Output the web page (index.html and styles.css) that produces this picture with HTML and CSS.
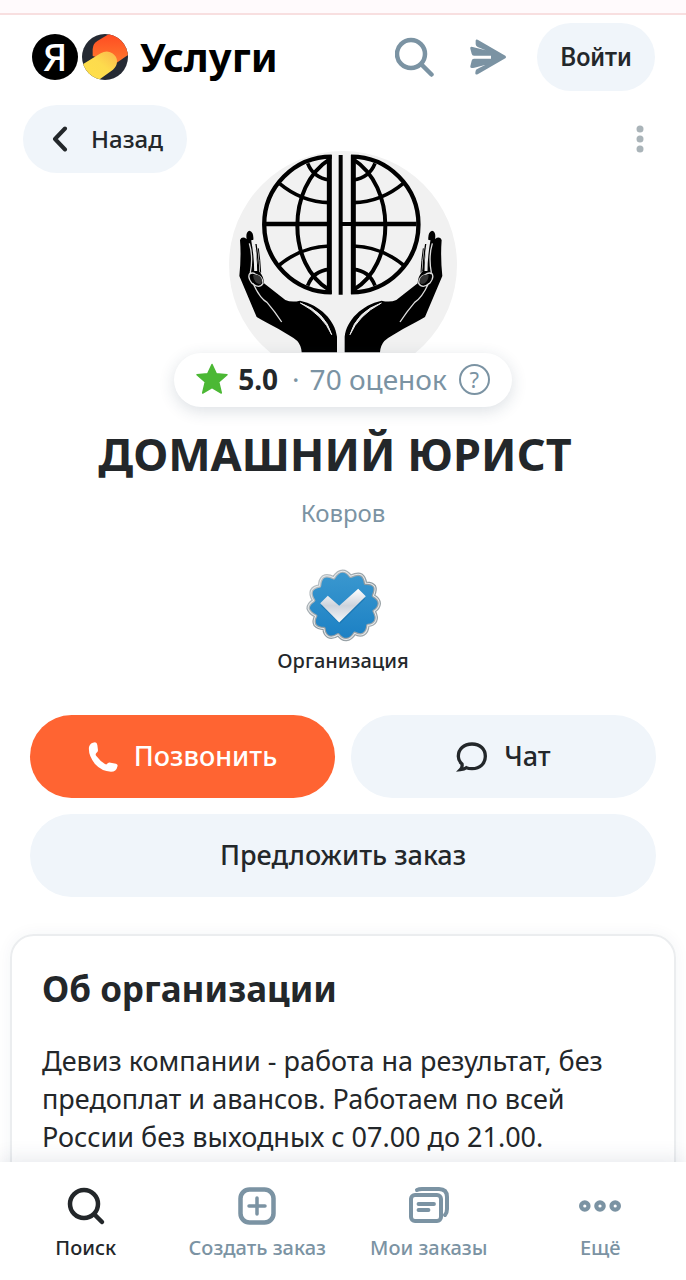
FILE: index.html
```html
<!DOCTYPE html>
<html lang="ru">
<head>
<meta charset="utf-8">
<meta name="viewport" content="width=device-width, initial-scale=1">
<title>ДОМАШНИЙ ЮРИСТ</title>
<link rel="stylesheet" href="styles.css">
</head>
<body>
<div class="app">
  <div class="strip"></div>
  <main class="page">
    <header class="header">
      <a class="logo" href="#" aria-label="Яндекс Услуги">
        <span class="logo-ya">Я</span>
        <svg class="logo-mark" viewBox="0 0 138 138" aria-hidden="true">
          <defs>
            <clipPath id="mark"><circle cx="69" cy="69" r="69"/></clipPath>
            <linearGradient id="yellow" x1="1" y1="0" x2="0" y2="1"><stop offset="0" stop-color="#fbb64c"/><stop offset=".45" stop-color="#fddb4d"/><stop offset="1" stop-color="#ffe04a"/></linearGradient>
            <linearGradient id="orange" x1="0" y1="0" x2="0" y2="1"><stop offset="0" stop-color="#ff4b22"/><stop offset="1" stop-color="#ff7a2e"/></linearGradient>
          </defs>
          <g clip-path="url(#mark)">
            <rect width="138" height="138" fill="#252a33"/>
            <path d="M81 0 46 21Q33 29 32 45V66L102 88 138 63V0Z" fill="url(#orange)"/>
            <path d="M0 92 56 58Q75 47 91 58 105 67 105 82 105 97 93 107L50 138H0Z" fill="url(#yellow)"/>
          </g>
        </svg>
        <span class="logo-text">Услуги</span>
      </a>
      <nav class="header-actions">
        <button class="icon-btn" aria-label="Поиск">
          <svg width="40" height="40" viewBox="0 0 40 40" fill="none" stroke="#7b93a3" stroke-width="4.5" stroke-linecap="round"><circle cx="16" cy="17" r="14"/><path d="m26.500 27.500 10 10"/></svg>
        </button>
        <button class="icon-btn" aria-label="Избранное">
          <svg width="38" height="36" viewBox="0 0 114 108" fill="#7b93a3"><path d="M20 5Q20 0 26 2L109 50Q113 54 109 58L26 106Q18 109 19 101L20 95Q21 91 26 89L48 78 16 86Q3 90 4 82L8 65Q9 59 15 59H66V50H15Q9 50 8 44L4 29Q3 21 11 24L50 34 26 24Q20 21 20 16Z"/></svg>
        </button>
        <button class="pill login">Войти</button>
      </nav>
    </header>

    <div class="toolbar">
      <button class="pill back">
        <svg width="16" height="26" viewBox="0 0 16 26" fill="none" stroke="#23272a" stroke-width="4" stroke-linecap="round" stroke-linejoin="round"><path d="M13 2.500 3 13l10 10.500"/></svg>
        <span>Назад</span>
      </button>
      <button class="more" aria-label="Меню">
        <svg width="8" height="28" viewBox="0 0 8 28" fill="#aab4b9"><circle cx="4" cy="4" r="3.500"/><circle cx="4" cy="14" r="3.500"/><circle cx="4" cy="24" r="3.500"/></svg>
      </button>
    </div>

    <section class="profile">
      <svg class="avatar" viewBox="27 33 684 684" role="img" aria-label="Фото организации">
        <defs>
          <clipPath id="round"><circle cx="369" cy="375" r="342"/></clipPath>
          <g id="half" fill="none" stroke="#000">
            <path d="M328 45V462" stroke-width="15"/>
            <path d="M335 50A202 203 0 0 0 335 457" stroke-width="13"/>
            <path d="M138 252H328" stroke-width="13"/>
            <path d="M328 58C200 140 200 375 328 450" stroke-width="12"/>
            <path d="M178 130Q245 186 328 188M178 375Q245 320 328 318" stroke-width="11"/>
            <path d="M263 70Q280 113 328 120M263 437Q280 392 328 388" stroke-width="11"/>
          </g>
          <g id="hand">
            <path d="M60 300Q66 287 80 297 76 275 89 272 102 277 100 300L118 395Q131 408 132 430L196 480Q215 488 240 482C300 495 345 540 351 590V637H245Q244 617 232 603C205 580 150 555 110 531L58 408Q64 350 60 300Z" fill="#000"/>
            <path d="M98 300Q107 350 107 393" fill="none" stroke="#efefef" stroke-width="9"/>
            <path d="M108 312Q114 350 116 393" fill="none" stroke="#000" stroke-width="4"/>
            <path d="M115 325Q120 360 122 398" fill="none" stroke="#000" stroke-width="3"/>
            <path d="M88 310Q100 350 91 398 80 410 96 430 118 448 129 430 128 410 111 405 97 395 90 402M99 430Q120 475 141 487 165 515 185 546" fill="none" stroke="#ddd" stroke-width="4"/>
            <path d="M241 489Q315 515 335 584 310 526 241 489Z" fill="#eee" stroke="#eee" stroke-width="3"/>
            <path d="M99 405Q120 400 126 419 126 438 111 430 100 422 99 405Z" fill="#333"/>
          </g>
        </defs>
        <g clip-path="url(#round)">
          <rect x="27" y="33" width="684" height="684" fill="#f1f1f1"/>
          <use href="#half"/>
          <use href="#half" transform="matrix(-1 0 0 1 728 0)"/>
          <path d="M362 45V464" stroke="#000" stroke-width="12"/>
          <path d="M362 252H400" stroke="#000" stroke-width="12"/>
          <use href="#hand"/>
          <use href="#hand" transform="matrix(-1 0 0 1 725 0)"/>
        </g>
      </svg>
      <button class="rating">
        <svg width="34" height="32" viewBox="0 0 34 32" fill="#4bb834" stroke="#4bb834" stroke-width="1.500" stroke-linejoin="round"><path d="m17 1.500 4.300 9.300L32 11.700l-8.300 7.200 2.600 11.100L17 24.500l-9.300 5.500 2.600-11.100L2 11.700l10.700-.9Z"/></svg>
        <strong>5.0</strong>
        <span class="dot">·</span>
        <span class="count">70 оценок</span>
        <span class="help">?</span>
      </button>
      <h1>ДОМАШНИЙ ЮРИСТ</h1>
      <p class="city">Ковров</p>
      <div class="badge">
        <svg width="76" height="76" viewBox="5 -3 220 220" aria-hidden="true">
          <defs>
            <linearGradient id="rim" x1="0" y1="0" x2="1" y2="1"><stop offset="0" stop-color="#c9cdd0"/><stop offset=".5" stop-color="#8d999f"/><stop offset="1" stop-color="#a4abaf"/></linearGradient>
            <linearGradient id="blue" x1="0" y1="0" x2="0" y2="1"><stop offset="0" stop-color="#3b98cf"/><stop offset="1" stop-color="#1b80c4"/></linearGradient>
            <linearGradient id="tick" x1="0" y1="0" x2="0" y2="1"><stop offset="0" stop-color="#fff"/><stop offset=".5" stop-color="#cdd3dc"/><stop offset="1" stop-color="#f5f7f9"/></linearGradient>
            <path id="seal" d="M114 9Q126 9 137 24 158 14 168 20 178 27 180 44 199 43 206 53 211 63 203 80 220 89 220 103 219 116 205 125 215 142 209 154 203 165 187 166 186 184 175 191 164 198 149 189 138 206 125 207 112 208 101 193 84 204 72 198 61 192 60 175 42 175 34 165 28 154 36 139 18 130 14 117 14 104 30 94 19 77 24 65 30 54 47 52 48 33 58 25 70 19 88 28 100 9 114 9Z"/>
          </defs>
          <use href="#seal" fill="url(#blue)" stroke="url(#rim)" stroke-width="10" stroke-linejoin="round"/>
          <use href="#seal" fill="none" stroke="#e6eaec" stroke-width="3" stroke-linejoin="round"/>
          <path d="m51 109 22-22 31 28 53-49 22 23-73 72Z" fill="#126da9" opacity=".6"/>
          <path d="m49 102 22-22 33 29 55-49 22 22-77 76Z" fill="url(#tick)"/>
        </svg>
        <span>Организация</span>
      </div>
      <div class="actions">
        <button class="action call">
          <svg width="30" height="30" viewBox="0 0 90 90" fill="#fff"><path d="M3 15Q7 2 21 1 27 1 28 9L30 25Q30 30 25 33 21 37 25 42 37 58 51 66 56 69 59 64 63 60 68 62L84 65Q91 67 88 74 85 89 69 89 41 88 21 66 0 40 3 15Z"/></svg>
          <span>Позвонить</span>
        </button>
        <button class="action">
          <svg width="32" height="30" viewBox="0 0 96 90" fill="none" stroke="#23272a" stroke-width="10"><path d="M48 6C73 6 88 22 88 43S73 80 48 80Q38 80 31 77 25 82 13 83 20 76 18 66 7 57 7 43C7 22 23 6 48 6Z"/></svg>
          <span>Чат</span>
        </button>
        <button class="action wide"><span>Предложить заказ</span></button>
      </div>
    </section>

    <section class="card">
      <h2>Об организации</h2>
      <p>Девиз компании - работа на результат, без предоплат и авансов. Работаем по всей России без выходных с 07.00 до 21.00.</p>
    </section>
  </main>

  <nav class="tabs">
    <a class="tab active" href="#">
      <svg width="40" height="40" viewBox="0 0 40 40" fill="none" stroke="currentColor" stroke-width="4.500" stroke-linecap="round"><circle cx="18" cy="18" r="14"/><path d="m29 29 7 7"/></svg>
      Поиск
    </a>
    <a class="tab" href="#">
      <svg width="40" height="40" viewBox="0 0 40 40" fill="none" stroke="currentColor" stroke-width="4.500" stroke-linecap="round"><rect x="3.500" y="3.500" width="33" height="33" rx="9"/><path d="M20 12v16M12 20h16" stroke-width="3.500"/></svg>
      Создать заказ
    </a>
    <a class="tab" href="#">
      <svg width="42" height="40" viewBox="0 0 42 40" fill="none" stroke="currentColor" stroke-linecap="round"><rect x="3" y="9" width="30" height="26" rx="4" stroke-width="4"/><path d="M9 4Q11 3 14 3H31q8 0 8 8v12q0 4-2 6" stroke-width="4"/><path d="M10.500 18h15.500M10.500 24h10" stroke-width="3.800"/></svg>
      Мои заказы
    </a>
    <a class="tab" href="#">
      <svg width="42" height="40" viewBox="0 0 42 40" fill="none" stroke="currentColor" stroke-width="4.200"><circle cx="5.800" cy="20" r="3.700"/><circle cx="21" cy="20" r="3.700"/><circle cx="36.200" cy="20" r="3.700"/></svg>
      Ещё
    </a>
  </nav>
</div>
</body>
</html>
```
FILE: styles.css
```css
* {
  box-sizing: border-box;
}

body {
  margin: 0;
  background: #fff;
  color: #23272a;
  font-family: "Noto Sans", "Open Sans", sans-serif;
}

button {
  border: 0;
  padding: 0;
  background: none;
  color: inherit;
  font: inherit;
}

a {
  color: inherit;
  text-decoration: none;
}

svg {
  display: block;
  flex: none;
}

h1, h2, p {
  margin: 0;
}

.app {
  display: flex;
  flex-direction: column;
  height: 100vh;
}

.strip {
  flex: none;
  height: 15px;
  background: #fffafc;
  border-bottom: 2px solid #f8dfe0;
}

.page {
  display: flex;
  flex-direction: column;
  flex: 1;
  min-height: 0;
  overflow-y: auto;
  scrollbar-width: none;
}

.header {
  display: flex;
  align-items: center;
  justify-content: space-between;
  padding: 8px 31px 0 32px;
}

.logo {
  display: flex;
  align-items: center;
  gap: 4px;
}

.logo-ya {
  display: flex;
  align-items: center;
  justify-content: center;
  width: 46px;
  height: 46px;
  padding-bottom: 3px;
  border-radius: 50%;
  background: #000;
  color: #fff;
  font-size: 38px;
  font-weight: 500;
  line-height: 42px;
}

.logo-mark {
  width: 46px;
  height: 46px;
}

.logo-text {
  padding-left: 8px;
  color: #000;
  font-size: 40px;
  font-weight: 700;
  line-height: 56px;
}

.header-actions {
  display: flex;
  align-items: center;
  gap: 34px;
}

.pill {
  height: 68px;
  border-radius: 34px;
  background: #f0f5fa;
  font-size: 24px;
  font-weight: 500;
}

.login {
  width: 118px;
  margin-left: -4px;
  font-family: Roboto, "Liberation Sans", sans-serif;
  font-size: 25px;
}

.toolbar {
  display: flex;
  align-items: center;
  justify-content: space-between;
  padding: 14px 42px 0 23px;
}

.back {
  display: flex;
  align-items: center;
  gap: 23px;
  padding: 0 24px 0 29px;
}

.back span,
.action span {
  padding-bottom: 2px;
}

.profile {
  display: flex;
  flex-direction: column;
  align-items: center;
  padding: 0 30px;
}

.avatar {
  width: 228px;
  height: 228px;
  margin-top: -22px;
}

.rating {
  position: relative;
  display: flex;
  align-items: center;
  height: 54px;
  margin-top: -26px;
  padding: 0 22px 2px 21px;
  border-radius: 27px;
  background: #fff;
  box-shadow: 0 4px 16px rgba(40, 60, 90, 0.16);
  font-size: 28px;
}

.rating strong {
  margin-left: 9px;
}

.dot {
  margin: 0 10px 0 14px;
  color: #7b93a3;
}

.count {
  color: #7b93a3;
}

.help {
  width: 31px;
  height: 31px;
  margin-left: 12px;
  border: 2px solid #7b93a3;
  border-radius: 50%;
  color: #7b93a3;
  font-size: 22px;
  line-height: 27px;
  text-align: center;
}

h1 {
  margin-top: 15px;
  padding-right: 16px;
  font-size: 45px;
  font-weight: 700;
  line-height: 64px;
}

.city {
  margin-top: 9px;
  color: #7b93a3;
  font-size: 24px;
  line-height: 36px;
}

.badge {
  display: flex;
  flex-direction: column;
  align-items: center;
  gap: 2px;
  margin-top: 36px;
  font-size: 20px;
  font-weight: 500;
  line-height: 32px;
}

.actions {
  display: grid;
  grid-template-columns: 1fr 1fr;
  gap: 16px;
  width: 100%;
  margin-top: 38px;
}

.action {
  display: flex;
  align-items: center;
  justify-content: center;
  gap: 16px;
  height: 83px;
  border-radius: 42px;
  background: #f0f5fa;
  font-size: 27px;
  font-weight: 500;
}

.call {
  background: #ff6432;
  color: #fff;
}

.wide {
  grid-column: 1 / -1;
}

.card {
  flex: 1 0 auto;
  margin: 37px 10px 0;
  padding: 29px 30px 64px;
  border: 2px solid #ebedef;
  border-radius: 24px;
  box-shadow: 0 0 16px rgba(40, 60, 90, 0.05);
}

h2 {
  font-size: 35px;
  font-weight: 700;
  line-height: 48px;
}

.card p {
  margin-top: 29px;
  font-size: 27px;
  line-height: 38px;
}

.tabs {
  position: relative;
  display: grid;
  flex: none;
  grid-template-columns: repeat(4, 1fr);
  padding: 24px 0 17px;
  background: #fff;
  box-shadow: 0 -2px 20px rgba(40, 60, 90, 0.12);
}

.tab {
  display: flex;
  flex-direction: column;
  align-items: center;
  gap: 7px;
  color: #7b93a3;
  font-size: 20px;
  font-weight: 500;
  line-height: 30px;
}

.active {
  color: #23272a;
}
```
